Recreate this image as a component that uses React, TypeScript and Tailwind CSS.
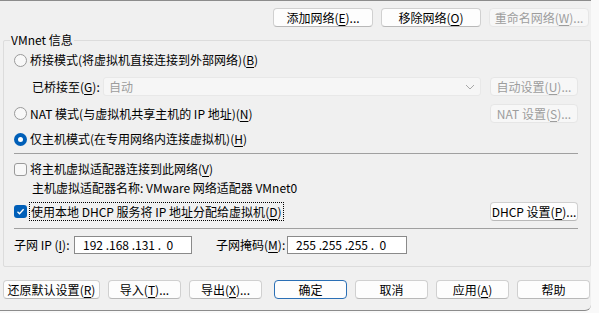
import type { ReactNode } from 'react';

const font = { fontFamily: '"Noto Sans CJK SC", "Noto Sans", sans-serif' };

function Btn({ children, className = '', disabled = false, primary = false }: { children: ReactNode; className?: string; disabled?: boolean; primary?: boolean }) {
    let tone = 'bg-[#fdfdfd] border-[#d0d0d0] border-b-[#b8b8b8] text-black';
    if (disabled) tone = 'bg-[#f7f7f7] border-[#e6e6e6] text-[#9d9d9d]';
    if (primary) tone = 'bg-[#fdfdfd] border-[#2a6fb5] text-black';
    return (
        <div className={`h-[19px] shrink-0 flex items-center justify-center rounded-[4px] border text-[12px] leading-none ${tone} ${className}`}>
            <span className="whitespace-nowrap">{children}</span>
        </div>
    );
}

function Radio({ checked = false }: { checked?: boolean }) {
    if (checked) {
        return (
            <div className="w-[13px] h-[13px] rounded-full bg-[#005fb8] flex items-center justify-center shrink-0">
                <div className="w-[5px] h-[5px] rounded-full bg-white" />
            </div>
        );
    }
    return <div className="w-[13px] h-[13px] rounded-full border border-[#9a9a9a] bg-[#f8f8f8] shrink-0" />;
}

function Check({ checked = false }: { checked?: boolean }) {
    if (checked) {
        return (
            <div className="w-[13px] h-[13px] rounded-[3px] bg-[#005fb8] flex items-center justify-center shrink-0">
                <svg width="9" height="9" viewBox="0 0 9 9">
                    <polyline points="1.5,4.8 3.5,6.8 7.6,2.2" fill="none" stroke="white" strokeWidth="1.3" />
                </svg>
            </div>
        );
    }
    return <div className="w-[13px] h-[13px] rounded-[3px] border border-[#9a9a9a] bg-[#f8f8f8] shrink-0" />;
}

function Key({ k }: { k: string }) {
    return (
        <>
            (<span className="underline underline-offset-2">{k}</span>)
        </>
    );
}

function IpBox({ text, className }: { text: string; className: string }) {
    return (
        <div className={`h-[18px] bg-white border border-[#8a8a8a] flex items-center pl-[8px] text-[12px] leading-none text-black ${className}`}>
            <span className="whitespace-pre">{text}</span>
        </div>
    );
}

export default function App() {
    return (
        <div className="w-[599px] h-[313px] bg-[#f9f9f9] overflow-hidden" style={font}>
            <div className="w-[591px] h-[311px] bg-[#f0f0f0] border-t border-b border-[#8c8c8c] rounded-br-[6px] flex flex-col">
                {/* top toolbar */}
                <div className="flex justify-end gap-[8px] pt-[7px] pr-[2px]">
                    <Btn className="w-[100px]">添加网络<Key k="E" />...</Btn>
                    <Btn className="w-[100px]">移除网络<Key k="O" /></Btn>
                    <Btn className="w-[100px]" disabled>重命名网络<Key k="W" />...</Btn>
                </div>

                {/* VMnet group */}
                <div className="relative mt-[13px] ml-[3px] w-[588px] border border-[#dcdcdc] rounded-[2px] pl-[10px] pr-[12px] pt-[9px] pb-[12px] text-[12px] leading-none text-black whitespace-nowrap">
                    <span className="absolute left-[6px] top-[-7px] bg-[#f0f0f0] px-[1px]">VMnet 信息</span>

                    <div className="h-[20px] flex items-center gap-[3px]">
                        <Radio />
                        <span>桥接模式(将虚拟机直接连接到外部网络)<Key k="B" /></span>
                    </div>

                    <div className="mt-[7px] h-[19px] flex items-center pl-[18px]">
                        <span className="w-[71px] shrink-0">已桥接至<Key k="G" />:</span>
                        <div className="w-[378px] h-[19px] bg-[#f6f6f6] border border-[#e8e8e8] rounded-[3px] flex items-center justify-between pl-[5px] pr-[5px] text-[#9d9d9d]">
                            <span>自动</span>
                            <svg width="10" height="6" viewBox="0 0 10 6">
                                <polyline points="1,1 5,5 9,1" fill="none" stroke="#a8a8a8" strokeWidth="1" />
                            </svg>
                        </div>
                        <Btn className="w-[88px] ml-auto" disabled>自动设置<Key k="U" />...</Btn>
                    </div>

                    <div className="mt-[8px] h-[19px] flex items-center gap-[3px]">
                        <Radio />
                        <span>NAT 模式(与虚拟机共享主机的 IP 地址)<Key k="N" /></span>
                        <Btn className="w-[88px] ml-auto" disabled>NAT 设置<Key k="S" />...</Btn>
                    </div>

                    <div className="mt-[6px] h-[20px] flex items-center gap-[3px]">
                        <Radio checked />
                        <span>仅主机模式(在专用网络内连接虚拟机)<Key k="H" /></span>
                    </div>

                    <div className="mt-[4px] h-[1px] bg-[#a0a0a0]" />

                    <div className="mt-[5px] h-[20px] flex items-center gap-[3px]">
                        <Check />
                        <span>将主机虚拟适配器连接到此网络<Key k="V" /></span>
                    </div>

                    <div className="h-[18px] flex items-center pl-[18px]">
                        <span>主机虚拟适配器名称: VMware 网络适配器 VMnet0</span>
                    </div>

                    <div className="mt-[5px] h-[19px] flex items-center gap-[2px]">
                        <Check checked />
                        <span className="h-[19px] flex items-center border border-dotted border-black px-[1px]">
                            <span>使用本地 DHCP 服务将 IP 地址分配给虚拟机<Key k="D" /></span>
                        </span>
                        <Btn className="w-[88px] ml-auto">DHCP 设置<Key k="P" />...</Btn>
                    </div>

                    <div className="mt-[7px] h-[1px] bg-[#a0a0a0]" />

                    <div className="mt-[7px] h-[18px] flex items-center">
                        <span className="w-[60px] shrink-0">子网 IP <Key k="I" />:</span>
                        <IpBox text="192 .168 .131 .  0" className="w-[118px]" />
                        <span className="w-[71px] shrink-0 ml-[24px]">子网掩码<Key k="M" />:</span>
                        <IpBox text="255 .255 .255 .  0" className="w-[120px]" />
                    </div>
                </div>

                {/* bottom buttons */}
                <div className="mt-[13px] pl-[3px] flex gap-[8px]">
                    <Btn className="w-[97px]">还原默认设置<Key k="R" /></Btn>
                    <Btn className="w-[73px]">导入<Key k="T" />...</Btn>
                    <Btn className="w-[73px]">导出<Key k="X" />...</Btn>
                    <Btn className="w-[73px] ml-[4px]" primary>确定</Btn>
                    <Btn className="w-[73px]">取消</Btn>
                    <Btn className="w-[73px]">应用<Key k="A" /></Btn>
                    <Btn className="w-[73px]">帮助</Btn>
                </div>
            </div>
        </div>
    );
}
